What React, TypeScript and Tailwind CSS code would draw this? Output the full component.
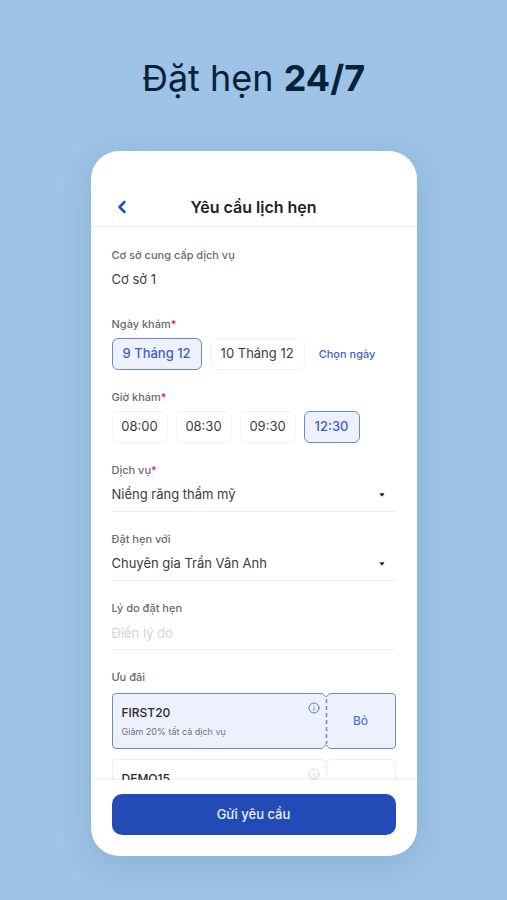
import { ReactNode, useState } from "react";
import { ChevronLeft, Info } from "lucide-react";
import clsx from "clsx";

const DATES = ["9 Tháng 12", "10 Tháng 12"];
const TIMES = ["08:00", "08:30", "09:30", "12:30"];
const OFFERS = [
  { code: "FIRST20", description: "Giảm 20% tất cả dịch vụ" },
  { code: "DEMO15" },
];

const labelClass = "block text-[11px] leading-4 font-medium text-[#6a6a6d]";

function Required() {
  return <span className="text-[#e5134f]">*</span>;
}

interface ChipProps {
  selected: boolean;
  onClick: () => void;
  className?: string;
  children: ReactNode;
}

function Chip({ selected, onClick, className, children }: ChipProps) {
  return (
    <button
      type="button"
      aria-pressed={selected}
      onClick={onClick}
      className={clsx(
        "h-8 rounded-md border text-[13px] whitespace-nowrap",
        selected
          ? "border-[#6c88d3] bg-[#edf1fd] font-medium text-[#3f62c4]"
          : "border-[#f3f3f4] bg-white text-[#3c3c3e]",
        className,
      )}
    >
      {children}
    </button>
  );
}

interface SelectFieldProps {
  id: string;
  label: string;
  value: string;
  required?: boolean;
}

function SelectField({ id, label, value, required }: SelectFieldProps) {
  return (
    <div>
      <label htmlFor={id} className={labelClass}>
        {label}
        {required && <Required />}
      </label>
      <div className="relative">
        <select
          id={id}
          className="block h-[34px] w-full appearance-none border-b border-[#efeff0] bg-transparent text-[13px] text-[#3c3c3e] outline-none"
        >
          <option>{value}</option>
        </select>
        <svg
          viewBox="0 0 6 4"
          className="pointer-events-none absolute top-[15px] right-[11px] h-1 w-1.5 fill-[#222224]"
          aria-hidden="true"
        >
          <path d="M1 0.3h4q.7 0 .3.5L3.4 3.3q-.4.4-.8 0L.7.8Q.3.3 1 .3z" />
        </svg>
      </div>
    </div>
  );
}

interface NotchProps {
  className: string;
}

function Notch({ className }: NotchProps) {
  return (
    <svg viewBox="0 0 10 6" className={clsx("absolute -left-[5px] h-1.5 w-2.5", className)}>
      <path
        d="M0 0h10v1.5Q8.3 1.5 7.5 2.5L5.7 4.7Q5 5.5 4.3 4.7L2.5 2.5Q1.7 1.5 0 1.5z"
        stroke="none"
        className="fill-white"
      />
      <path
        d="M0 1.5Q1.7 1.5 2.5 2.5L4.3 4.7Q5 5.5 5.7 4.7L7.5 2.5Q8.3 1.5 10 1.5"
        fill="none"
      />
    </svg>
  );
}

interface OfferCardProps {
  code: string;
  description?: string;
  applied: boolean;
  onToggle: () => void;
}

function OfferCard({ code, description, applied, onToggle }: OfferCardProps) {
  const stroke = applied ? "stroke-[#6c88d3]" : "stroke-[#e8e8ea]";

  return (
    <div
      className={clsx(
        "relative flex h-14 rounded border",
        applied ? "border-[#6c88d3] bg-[#edf1fd]" : "border-[#efeff0] bg-white",
      )}
    >
      <div className="flex min-w-0 flex-1 items-start justify-between pt-2.5 pr-1.5 pl-[9px]">
        <div>
          <p className="text-xs leading-[18px] font-medium text-[#2c2c2f]">{code}</p>
          {description && (
            <p className="mt-1 text-[9px] leading-3 text-[#717175]">{description}</p>
          )}
        </div>
        <button
          type="button"
          aria-label={`Chi tiết ${code}`}
          className={applied ? "text-[#5475cc]" : "text-[#d6d6d8]"}
        >
          <Info size={12} strokeWidth={2} className="-mt-0.5" />
        </button>
      </div>

      {/* Tear line */}
      <div className="relative w-px">
        <svg className={clsx("absolute inset-0 h-full w-px overflow-visible", stroke)}>
          <line x1="0.5" y1="5" x2="0.5" y2="50" strokeWidth="1.5" strokeDasharray="4 3" />
        </svg>
        <Notch className={clsx("-top-0.5", stroke)} />
        <Notch className={clsx("-bottom-0.5 rotate-180", stroke)} />
      </div>

      <button
        type="button"
        onClick={onToggle}
        className="w-[68px] text-xs font-medium text-[#5475cc]"
      >
        {applied ? "Bỏ" : "Dùng"}
      </button>
    </div>
  );
}

export default function App() {
  const [date, setDate] = useState("9 Tháng 12");
  const [time, setTime] = useState("12:30");
  const [offer, setOffer] = useState("FIRST20");

  return (
    <div className="flex h-screen flex-col items-center bg-[#9dc3e6] px-6 pb-11 font-['Inter',sans-serif]">
      <h1 className="pt-[54px] pb-[49px] text-4xl leading-[48px] font-normal text-[#06213a]">
        Đặt hẹn <strong className="font-bold">24/7</strong>
      </h1>

      {/* Phone screen */}
      <main className="flex min-h-0 w-full max-w-[326px] flex-1 flex-col overflow-hidden rounded-[28px] bg-white shadow-[0_8px_32px_rgba(60,100,140,0.2)]">
        <header className="grid grid-cols-[20px_1fr_20px] items-center border-b border-[#efeff0] px-[21px] pt-11 pb-[7px]">
          <button type="button" aria-label="Quay lại" className="text-[#244cb8]">
            <ChevronLeft size={20} strokeWidth={3} />
          </button>
          <h2 className="text-center text-base leading-6 font-semibold text-[#222224]">
            Yêu cầu lịch hẹn
          </h2>
        </header>

        <form className="flex min-h-0 flex-1 flex-col gap-[19px] overflow-y-auto px-[21px] pt-5 [scrollbar-width:none]">
          <div>
            <p className={labelClass}>Cơ sở cung cấp dịch vụ</p>
            <p className="pb-0.5 text-[13px] leading-8 text-[#3c3c3e]">Cơ sở 1</p>
          </div>

          <fieldset>
            <legend className={labelClass}>
              Ngày khám
              <Required />
            </legend>
            <div className="mt-1.5 flex items-center gap-2">
              {DATES.map((item) => (
                <Chip
                  key={item}
                  selected={item === date}
                  onClick={() => setDate(item)}
                  className="px-2.5"
                >
                  {item}
                </Chip>
              ))}
              <button type="button" className="ml-1.5 text-[11px] font-medium text-[#3f62c4]">
                Chọn ngày
              </button>
            </div>
          </fieldset>

          <fieldset>
            <legend className={labelClass}>
              Giờ khám
              <Required />
            </legend>
            <div className="mt-1.5 flex gap-2">
              {TIMES.map((item) => (
                <Chip
                  key={item}
                  selected={item === time}
                  onClick={() => setTime(item)}
                  className="min-w-14"
                >
                  {item}
                </Chip>
              ))}
            </div>
          </fieldset>

          <SelectField id="service" label="Dịch vụ" value="Niềng răng thẩm mỹ" required />
          <SelectField id="doctor" label="Đặt hẹn với" value="Chuyên gia Trần Vân Anh" />

          <div>
            <label htmlFor="reason" className={labelClass}>
              Lý do đặt hẹn
            </label>
            <input
              id="reason"
              type="text"
              placeholder="Điền lý do"
              className="block h-[34px] w-full border-b border-[#efeff0] text-[13px] text-[#3c3c3e] outline-none placeholder:text-[#d3d3d5]"
            />
          </div>

          <div>
            <p className={labelClass}>Ưu đãi</p>
            <div className="mt-2 flex flex-col gap-2.5">
              {OFFERS.map((item) => (
                <OfferCard
                  key={item.code}
                  code={item.code}
                  description={item.description}
                  applied={item.code === offer}
                  onToggle={() => setOffer(item.code === offer ? "" : item.code)}
                />
              ))}
            </div>
          </div>
        </form>

        <footer className="relative px-[21px] pt-3.5 pb-[21px] shadow-[0_-1px_3px_rgba(0,0,0,0.08)]">
          <button
            type="button"
            className="h-[41px] w-full rounded-[10px] bg-[#224bb8] text-[13px] font-medium text-[#e9eefc]"
          >
            Gửi yêu cầu
          </button>
        </footer>
      </main>
    </div>
  );
}
